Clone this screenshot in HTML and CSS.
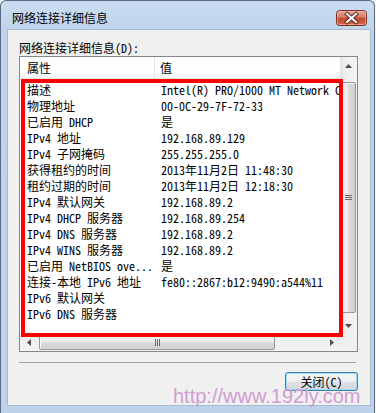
FILE: index.html
```html
<!DOCTYPE html>
<html lang="zh-CN">
<head>
<meta charset="utf-8">
<title>网络连接详细信息</title>
<link rel="stylesheet" href="styles.css">
</head>
<body>
<div class="window">
  <div class="titlebar">
    <span class="title">网络连接详细信息</span>
    <span class="close">
      <svg width="31" height="16" viewBox="0 0 31 16">
        <defs>
          <linearGradient id="cg" x1="0" y1="0" x2="0" y2="1">
            <stop offset="0" stop-color="#e9a99c"/>
            <stop offset="0.45" stop-color="#d47a66"/>
            <stop offset="0.5" stop-color="#c14a32"/>
            <stop offset="1" stop-color="#cf6a4c"/>
          </linearGradient>
        </defs>
        <rect x="0.5" y="0.5" width="30" height="15" rx="3" fill="url(#cg)" stroke="#7b2e22"/>
        <rect x="1.5" y="1.5" width="28" height="13" rx="2" fill="none" stroke="#f3c4b8" stroke-opacity="0.6"/>
        <path d="M11 4 L20 12 M20 4 L11 12" stroke="#5a1c12" stroke-width="4" stroke-linecap="square"/>
        <path d="M11 4 L20 12 M20 4 L11 12" stroke="#ffffff" stroke-width="2.2" stroke-linecap="square"/>
      </svg>
    </span>
  </div>
  <div class="client">
    <div class="label">网络连接详细信息(D):</div>
    <div class="list">
      <div class="view">
        <div class="header">
          <div class="hcell hcol1">属性</div>
          <div class="hcell hcol2">值</div>
        </div>
        <div class="rows">
          <div class="row"><span class="c1">描述</span><span class="c2">Intel(R) PRO/1000 MT Network Connection</span></div>
          <div class="row"><span class="c1">物理地址</span><span class="c2">00-0C-29-7F-72-33</span></div>
          <div class="row"><span class="c1">已启用 DHCP</span><span class="c2">是</span></div>
          <div class="row"><span class="c1">IPv4 地址</span><span class="c2">192.168.89.129</span></div>
          <div class="row"><span class="c1">IPv4 子网掩码</span><span class="c2">255.255.255.0</span></div>
          <div class="row"><span class="c1">获得租约的时间</span><span class="c2">2013年11月2日 11:48:30</span></div>
          <div class="row"><span class="c1">租约过期的时间</span><span class="c2">2013年11月2日 12:18:30</span></div>
          <div class="row"><span class="c1">IPv4 默认网关</span><span class="c2">192.168.89.2</span></div>
          <div class="row"><span class="c1">IPv4 DHCP 服务器</span><span class="c2">192.168.89.254</span></div>
          <div class="row"><span class="c1">IPv4 DNS 服务器</span><span class="c2">192.168.89.2</span></div>
          <div class="row"><span class="c1">IPv4 WINS 服务器</span><span class="c2">192.168.89.2</span></div>
          <div class="row"><span class="c1">已启用 NetBIOS ove...</span><span class="c2">是</span></div>
          <div class="row"><span class="c1">连接-本地 IPv6 地址</span><span class="c2">fe80::2867:b12:9490:a544%11</span></div>
          <div class="row"><span class="c1">IPv6 默认网关</span><span class="c2"></span></div>
          <div class="row"><span class="c1">IPv6 DNS 服务器</span><span class="c2"></span></div>
        </div>
      </div>
      <div class="vscroll">
        <div class="sbtn">
          <svg width="7" height="4" viewBox="0 0 7 4"><path d="M0 4 L3.5 0 L7 4 Z" fill="#4d4d4d"/></svg>
        </div>
        <div class="vtrack">
          <div class="vthumb">
            <svg width="7" height="5" viewBox="0 0 7 5"><path d="M0 0.5 H7 M0 2.5 H7 M0 4.5 H7" stroke="#6a6a6a" stroke-width="1"/></svg>
          </div>
        </div>
        <div class="sbtn">
          <svg width="7" height="4" viewBox="0 0 7 4"><path d="M0 0 L3.5 4 L7 0 Z" fill="#4d4d4d"/></svg>
        </div>
      </div>
      <div class="hscroll">
        <div class="sbtn">
          <svg width="4" height="7" viewBox="0 0 4 7"><path d="M4 0 L0 3.5 L4 7 Z" fill="#4d4d4d"/></svg>
        </div>
        <div class="htrack">
          <div class="hthumb">
            <svg width="5" height="7" viewBox="0 0 5 7"><path d="M0.5 0 V7 M2.5 0 V7 M4.5 0 V7" stroke="#6a6a6a" stroke-width="1"/></svg>
          </div>
        </div>
        <div class="sbtn">
          <svg width="4" height="7" viewBox="0 0 4 7"><path d="M0 0 L4 3.5 L0 7 Z" fill="#4d4d4d"/></svg>
        </div>
      </div>
      <div class="corner"></div>
      <div class="highlight"></div>
    </div>
    <div class="separator"></div>
    <div class="buttons">
      <button class="btn">关闭(C)</button>
    </div>
  </div>
</div>
<div class="watermark">http://www.192ly.com</div>
</body>
</html>
```
FILE: styles.css
```css
* {
  box-sizing: border-box;
}

html, body {
  margin: 0;
  padding: 0;
}

body {
  width: 376px;
  height: 413px;
  overflow: hidden;
  position: relative;
  background: #f4f6f8;
  font-family: "Noto Sans Mono CJK SC", "Liberation Mono", "Noto Sans CJK SC", monospace;
  font-size: 12px;
  color: #000;
}

.window {
  width: 375px;
  height: 413px;
  border: 1px solid #5b6b80;
  border-bottom: none;
  border-radius: 6px 6px 0 0;
  background: linear-gradient(180deg, #c9dcf1 0%, #bed4ec 8%, #bcd3eb 100%);
  display: flex;
  flex-direction: column;
}

.titlebar {
  height: 29px;
  display: flex;
  align-items: flex-start;
  justify-content: space-between;
  padding-left: 11px;
  padding-right: 7px;
}

.title {
  line-height: 16px;
  margin-top: 9px;
}

.close {
  margin-top: 9px;
  width: 31px;
  height: 16px;
  display: block;
}

.close svg {
  display: block;
}

.client {
  flex: 1;
  margin: 0 4px 8px 7px;
  background: #f0f0f0;
  padding: 10px 12px 0 11px;
  display: flex;
  flex-direction: column;
  box-shadow: 0 0 0 1px #a7bbd2;
}

.label {
  height: 16px;
  line-height: 16px;
}

.list {
  position: relative;
  height: 296px;
  border: 1px solid #828790;
  background: #fff;
  display: grid;
  grid-template-columns: 320px 17px;
  grid-template-rows: 277px 17px;
}

.view {
  overflow: hidden;
  background: #fff;
}

.header {
  height: 22px;
  display: flex;
  border-bottom: 1px solid #e5e5e5;
  background: linear-gradient(180deg, #ffffff 0%, #ffffff 60%, #f6f7f8 100%);
}

.hcell {
  line-height: 21px;
  white-space: nowrap;
}

.hcol1 {
  width: 135px;
  padding-left: 7px;
  border-right: 1px solid #e5e5e5;
}

.hcol2 {
  padding-left: 5px;
}

.rows {
  padding-top: 3px;
}

.row {
  height: 16px;
  line-height: 16px;
  display: flex;
  white-space: nowrap;
}

.c1 {
  flex: 0 0 135px;
  padding-left: 7px;
  overflow: hidden;
}

.c2 {
  padding-left: 6px;
}

.vscroll {
  display: flex;
  flex-direction: column;
  background: linear-gradient(90deg, #e3e3e3 0%, #efefef 30%, #f3f3f3 100%);
}

.hscroll {
  display: flex;
  background: linear-gradient(180deg, #e3e3e3 0%, #efefef 30%, #f3f3f3 100%);
}

.sbtn {
  flex: 0 0 17px;
  height: 17px;
  display: flex;
  align-items: center;
  justify-content: center;
}

.sbtn svg {
  display: block;
}

.vtrack {
  flex: 1;
  padding: 8px 1px 0 1px;
}

.vthumb {
  height: 231px;
  border: 1px solid #979797;
  border-radius: 2px;
  background: linear-gradient(90deg, #f4f4f4 0%, #e9e9e9 45%, #d8d8d8 55%, #d0d0d0 100%);
  box-shadow: inset 1px 1px 0 #fbfbfb;
  display: flex;
  align-items: center;
  justify-content: center;
}

.htrack {
  flex: 1;
  padding: 1px 0 1px 2px;
}

.hthumb {
  width: 236px;
  height: 100%;
  border: 1px solid #979797;
  border-radius: 2px;
  background: linear-gradient(180deg, #f4f4f4 0%, #e9e9e9 45%, #d8d8d8 55%, #d0d0d0 100%);
  box-shadow: inset 1px 1px 0 #fbfbfb;
  display: flex;
  align-items: center;
  justify-content: center;
}

.vthumb svg,
.hthumb svg {
  display: block;
}

.corner {
  background: #f0f0f0;
}

.highlight {
  position: absolute;
  left: 1px;
  top: 22px;
  width: 322px;
  height: 258px;
  border: 4px solid #ff0000;
  pointer-events: none;
}

.separator {
  margin-top: 10px;
  width: 337px;
  height: 1px;
  background: #a0a0a0;
}

.buttons {
  margin-top: 9px;
  display: flex;
  justify-content: flex-end;
}

.btn {
  width: 73px;
  height: 19px;
  padding: 0;
  margin: 0;
  font-family: inherit;
  font-size: 12px;
  line-height: 17px;
  color: #000;
  border: 1px solid #3c7fb1;
  border-radius: 3px;
  background: linear-gradient(180deg, #f4f6f8 0%, #eceef0 50%, #dfe2e5 51%, #d2d6da 100%);
  box-shadow: inset 0 0 0 1px #9fdcf7;
}

.watermark {
  position: absolute;
  left: 173px;
  top: 386px;
  font-family: "Liberation Sans", Arial, sans-serif;
  font-size: 20px;
  line-height: 20px;
  color: #d19cd3;
  white-space: nowrap;
  pointer-events: none;
}
```
